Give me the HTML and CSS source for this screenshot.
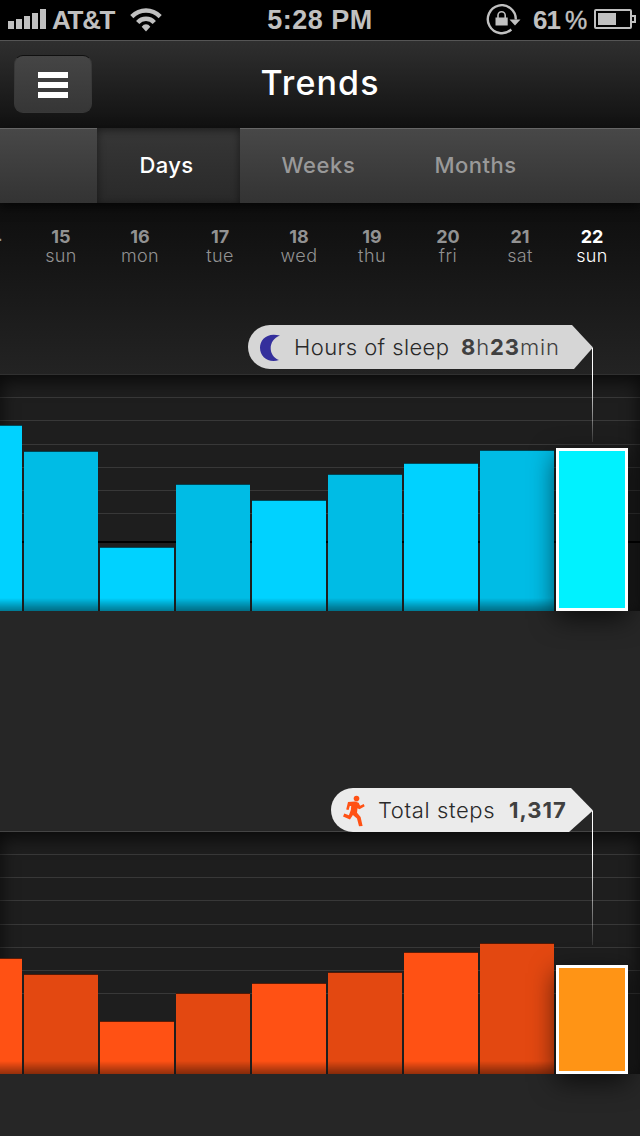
FILE: index.html
```html
<!DOCTYPE html>
<html lang="en">
<head>
<meta charset="utf-8">
<title>Trends</title>
<link rel="stylesheet" href="styles.css">
</head>
<body>
<div class="status">
  <div class="status-left">
    <svg class="signal" width="38" height="20" viewBox="0 0 38 20" fill="#c0c0c0"><path d="M0 12h6v8H0zM8 10h6v10H8zM16 7h6v13h-6zM24 4h6v16h-6zM32 0h6v20h-6z"/></svg>
    <span class="carrier">AT&amp;T</span>
    <svg class="wifi" width="32" height="24" viewBox="0 0 32 24" fill="none" stroke="#c0c0c0"><path stroke-width="4.4" d="M1.8 8.6Q8 2.5 16 2.5t14.2 6.1M7.7 14.5Q11 10.8 16 10.8t8.3 3.7"/><path fill="#c0c0c0" stroke="none" d="M16 23.5l-4.3-4.8q1.8-2.4 4.3-2.4t4.3 2.4z"/></svg>
  </div>
  <div class="clock">5:28 PM</div>
  <div class="status-right">
    <svg class="lock" width="35" height="31" viewBox="0 0 35 31" fill="none" stroke="#c0c0c0"><path stroke-width="2.4" d="M25.3 25.5A14 14 0 1 1 29.8 15.5"/><path fill="#c0c0c0" stroke="none" d="M23.5 15.5H34.5L29 21.5zM9.5 13.4h12.2v8H9.5z"/><path stroke-width="1.6" d="M12 14v-2.7a3.6 3.6 0 0 1 7.2 0V14"/></svg>
    <span class="percent">61</span><span class="sign">%</span>
    <svg class="battery" width="42" height="20" viewBox="0 0 42 20" fill="none" stroke="#c0c0c0"><rect x="1" y="1" width="36" height="18" rx="1" stroke-width="2"/><path stroke-width="2" d="M38 7h3v6h-3"/><path fill="#c0c0c0" stroke="none" d="M4 4h18v12H4z"/></svg>
  </div>
</div>
<header class="nav">
  <button class="menu" aria-label="Menu"><i></i><i></i><i></i></button>
  <h1>Trends</h1>
</header>
<nav class="tabs">
  <a class="tab active"><span>Days</span></a>
  <a class="tab weeks"><span>Weeks</span></a>
  <a class="tab months"><span>Months</span></a>
</nav>
<main>
  <div class="dates">
    <div class="date cut"><b>14</b></div>
    <div class="date"><b>15</b><span>sun</span></div>
    <div class="date"><b>16</b><span>mon</span></div>
    <div class="date"><b>17</b><span>tue</span></div>
    <div class="date"><b>18</b><span>wed</span></div>
    <div class="date"><b>19</b><span>thu</span></div>
    <div class="date"><b>20</b><span>fri</span></div>
    <div class="date"><b>21</b><span>sat</span></div>
    <div class="date today"><b>22</b><span>sun</span></div>
  </div>
  <section class="chart sleep">
    <div class="lines"><i></i><i></i><i></i><i></i><i></i><i></i><i class="goal"></i></div>
    <div class="bars">
      <div class="bar" style="height:186px"></div>
      <div class="bar" style="height:160px"></div>
      <div class="bar" style="height:64px"></div>
      <div class="bar" style="height:127px"></div>
      <div class="bar" style="height:111px"></div>
      <div class="bar" style="height:137px"></div>
      <div class="bar" style="height:148px"></div>
      <div class="bar" style="height:161px"></div>
      <div class="bar selected" style="height:163px"></div>
    </div>
    <div class="callout">
      <svg class="moon" width="22" height="28" viewBox="0 0 22 28"><path fill="#342f9c" d="M20 1.6C7-2.2 0 5.8 0 13.8c0 9.2 8.5 15.6 19 12.3C8 21.8 7.5 6.5 20 1.6z"/></svg>
      <span class="name">Hours of sleep</span>
      <span class="value"><b>8</b>h<b>23</b>min</span>
    </div>
    <div class="leader"></div>
  </section>
  <section class="chart steps">
    <div class="lines"><i></i><i></i><i></i><i></i><i></i><i></i><i></i></div>
    <div class="bars">
      <div class="bar" style="height:116px"></div>
      <div class="bar" style="height:100px"></div>
      <div class="bar" style="height:53px"></div>
      <div class="bar" style="height:81px"></div>
      <div class="bar" style="height:91px"></div>
      <div class="bar" style="height:102px"></div>
      <div class="bar" style="height:122px"></div>
      <div class="bar" style="height:131px"></div>
      <div class="bar selected" style="height:109px"></div>
    </div>
    <div class="callout">
      <svg class="runner" width="22" height="32" viewBox="0 0 22 32" fill="#ff5114"><circle cx="13.5" cy="3.6" r="2.8"/><path d="M5 7L12 6.4l3.6 1.4 1.5 3 3.6-1.8 1 2.2-5.2 3-2-1-.5 4.5 3.6 4.2 2 9-3.6.4-2-7.8-4.1-3.5L7 24.6 0 21.4l1.3-2.8 4.6 1.7 2-5.6.3-3.8-1.4.1-1.2 3.9-2.4-.5z"/></svg>
      <span class="name">Total steps</span>
      <span class="value"><b>1,317</b></span>
    </div>
    <div class="leader"></div>
  </section>
</main>
</body>
</html>
```
FILE: styles.css
```css
* { box-sizing: border-box; }
body {
  margin: 0;
  width: 640px;
  height: 1136px;
  overflow: hidden;
  background: #262626;
  font-family: Inter, "Open Sans", sans-serif;
}
svg { display: block; flex: none; }

.status {
  display: grid;
  grid-template-columns: 220px 200px 220px;
  height: 40px;
  background: #000;
  color: #c0c0c0;
  font: bold 27px/40px "Liberation Sans", sans-serif;
}
.status-left, .status-right { display: flex; }
.signal { margin: 9px 6px 0 8px; }
.carrier { width: 78px; font-size: 26px; letter-spacing: -1.3px; }
.wifi { margin-top: 8px; }
.clock { text-align: center; letter-spacing: 0.5px; }
.lock { margin: 4px 0 0 66px; }
.percent { margin-left: 12px; width: 32px; font-size: 26px; letter-spacing: -1px; }
.sign { width: 28px; font-size: 25px; font-weight: normal; -webkit-text-stroke: 0.4px #c0c0c0; }
.battery { margin-top: 9px; margin-left: 1px; }

.nav {
  display: grid;
  grid-template-columns: 120px 1fr 120px;
  height: 88px;
  border-top: 1px solid #555;
  background: linear-gradient(#2f2f2f, #111);
}
.menu {
  display: flex;
  flex-direction: column;
  align-items: center;
  justify-content: center;
  gap: 4px;
  width: 78px;
  height: 58px;
  margin: 14px 0 0 14px;
  padding: 2px 0 0;
  border: 1px solid #383838;
  border-top: 1px solid #101010;
  border-radius: 9px;
  background: linear-gradient(#454545, #363636);
}
.menu i { width: 30px; height: 6px; background: #fff; }
h1 {
  margin: 0;
  text-align: center;
  color: #fff;
  font-size: 34px;
  font-weight: 550;
  line-height: 83px;
  letter-spacing: 1.1px;
}

.tabs {
  position: relative;
  display: flex;
  height: 75px;
  padding-left: 97px;
  background: linear-gradient(#484848, #333);
  box-shadow: inset 0 1px #666, 0 4px 10px rgba(0, 0, 0, .6);
  color: #999;
  font-size: 22px;
  font-weight: 550;
  line-height: 75px;
  text-align: center;
}
.tab.active {
  width: 143px;
  padding-right: 4px;
  letter-spacing: 0.4px;
  color: #fff;
  background: linear-gradient(#373737, #292929);
  box-shadow: inset 0 2px 8px rgba(0, 0, 0, .5);
}
.weeks { width: 157px; letter-spacing: 0.6px; }
.months { width: 157px; letter-spacing: 0.5px; }

main { height: 933px; background: linear-gradient(#0e0e0e, #232323 171px, #262626 408px); }
.dates {
  display: grid;
  grid-template-columns: 20px 80px 78px 82px 76px 70px 82px 62px 82px;
  height: 171px;
  padding: 24px 0 0 1px;
  color: #929292;
  font-size: 18px;
  line-height: 18px;
  text-align: center;
}
.date { display: flex; flex-direction: column; }
.date span { padding-top: 1px; font-weight: 350; letter-spacing: 0.4px; }
.date b { padding-top: 0.5px; }
.cut b { width: 20px; margin-left: -19px; text-align: right; }
.today { color: #fff; }

.chart {
  position: relative;
  height: 237px;
  border-top: 1px solid #303030;
  background: #1e1e1e;
}
.chart::before {
  content: "";
  position: absolute;
  inset: 0;
  box-shadow: inset 0 6px 18px rgba(0, 0, 0, .7);
}
.steps { height: 243px; margin-top: 220px; border-color: #444; }
.lines { display: flex; flex-direction: column; padding-top: 22px; gap: 22px; }
.lines i { height: 1px; background: #383838; }
.lines i:nth-child(3) { margin-top: 1px; }
.steps .lines i:nth-child(3) { margin-top: 0; }
.steps .lines i:nth-child(4) { margin-top: 1px; }
.lines .goal { height: 2px; margin-top: 5px; background: #000; }
.bars {
  position: absolute;
  left: 0;
  bottom: 0;
  display: flex;
  align-items: flex-end;
  gap: 2px;
  width: 640px;
}
.bar {
  width: 74px;
  border-top: 1px solid rgba(0, 0, 0, .4);
  background: linear-gradient(to top, rgba(0, 0, 0, .42), rgba(0, 0, 0, .3) 4px, transparent 13px) var(--bar);
}
.bar:first-child { width: 22px; }
.sleep .bar { --bar: #00d2ff; }
.sleep .bar:nth-child(even) { --bar: #00bce5; }
.steps .bar { --bar: #ff5114; }
.steps .bar:nth-child(even) { --bar: #e34811; }
.bars .bar.selected {
  width: 72px;
  border: 3px solid #fff;
  background: #00f2ff;
  box-shadow: 0 8px 26px rgba(0, 0, 0, .65);
}
.steps .bars .bar.selected { background: #ff9415; }

.callout {
  position: absolute;
  top: -50px;
  left: 248px;
  display: flex;
  width: 345px;
  height: 44px;
  padding-left: 12px;
  border-radius: 22px 0 0 22px;
  clip-path: polygon(0 0, calc(100% - 21px) 0, 100% 22.5px, calc(100% - 19px) 100%, 0 100%);
  background: #d6d6d6;
  color: #292929;
  font-size: 22px;
  font-weight: 350;
  line-height: 45px;
  white-space: nowrap;
}
.steps .callout {
  top: -44px;
  left: 331px;
  width: 262px;
  clip-path: polygon(0 0, calc(100% - 22px) 0, 100% 22.5px, calc(100% - 24px) 100%, 0 100%);
  background: #ebebeb;
}
.callout b { font-weight: 650; }
.moon { margin-top: 9px; }
.runner { margin-top: 7px; }
.name { width: 167px; margin-left: 12px; letter-spacing: 0.4px; }
.steps .name { width: 130px; margin-left: 13px; letter-spacing: 0.6px; }
.value { color: #404040; letter-spacing: 0.9px; }
.steps .value { letter-spacing: 1px; margin-left: 1px; }
.leader {
  position: absolute;
  left: 592px;
  top: -27px;
  width: 1px;
  height: 94px;
  background: linear-gradient(#fff 30%, rgba(255, 255, 255, .1));
}
.steps .leader { top: -21px; height: 134px; }
```
